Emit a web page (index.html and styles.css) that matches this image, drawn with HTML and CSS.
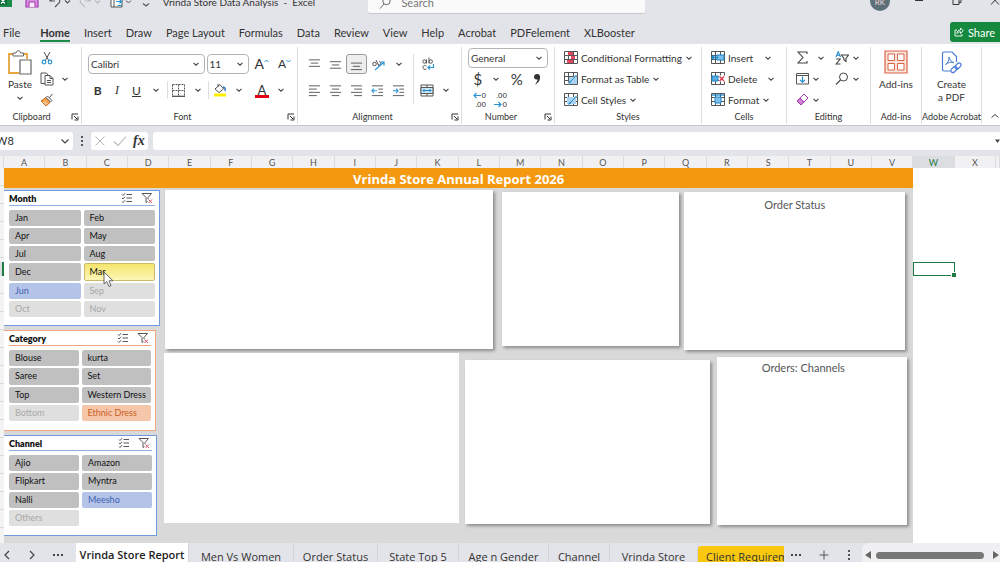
FILE: index.html
```html
<!DOCTYPE html>
<html lang="en">
<head>
<meta charset="utf-8">
<title>Vrinda Store Data Analysis - Excel</title>
<link rel="stylesheet" href="styles.css">
</head>
<body>
<svg class="defs" aria-hidden="true">
  <symbol id="chev" viewBox="0 0 8 8"><path d="M1.5 2.8 4 5.2 6.5 2.8" fill="none" stroke="#444" stroke-width="1.1"/></symbol>
  <symbol id="launch" viewBox="0 0 8 8"><path d="M1 6.5V1h6M3 3l3 3M7 3.5V7H3.5" fill="none" stroke="#333" stroke-width="1"/></symbol>
  <symbol id="multi" viewBox="0 0 12 12"><path d="M1 2.5 2 3.5 4 1.2M1 6 2 7 4 4.7M1 9.5 2 10.500 4 8.200M5.500 2.500H11M5.500 6H11M5.500 9.500H11" fill="none" stroke="#555" stroke-width="1"/></symbol>
  <symbol id="clear" viewBox="0 0 12 12"><path d="M7 7V5.500L10.500 1.500H1L5 5.500V10.500L6.500 9.500" fill="none" stroke="#555" stroke-width="1"/><path d="M7.500 7.500 11 11M11 7.500 7.500 11" stroke="#d8536c" stroke-width="1"/></symbol>
  <symbol id="lefta" viewBox="0 0 14 14"><path d="M1 2H13M1 5.500H9.500M1 9H13M1 12.500H9.500" stroke="#555" stroke-width="1"/></symbol>
  <symbol id="centa" viewBox="0 0 14 14"><path d="M1 2H13M3 5.500H11M1 9H13M3 12.500H11" stroke="#555" stroke-width="1"/></symbol>
  <symbol id="righta" viewBox="0 0 14 14"><path d="M1 2H13M4.500 5.500H13M1 9H13M4.500 12.500H13" stroke="#555" stroke-width="1"/></symbol>
  <symbol id="grid" viewBox="0 0 14 13"><path d="M.5 .5H13.500V12.500H.5ZM.5 4.500H13.500M.5 8.500H13.500M4.500 .5V12.500M9.500 .5V12.500" fill="#fff" stroke="#555" stroke-width="1"/></symbol>
</svg>

<header class="titlebar">
  <div class="quick">
    <svg width="12" height="14" viewBox="0 0 12 14"><path d="M0 0H12V13H0Z" fill="#1d8a4c"/><path d="M6 0h6v6H6z" fill="#37b876"/><path d="M0 3H7V11H0Z" fill="#0f6a38"/><path d="M1 5 5 9.500M5 5 1 9.500" stroke="#fff" stroke-width="1.200"/></svg>
    <svg class="save" width="14" height="14" viewBox="0 0 14 14"><path d="M1 1H11L13 3V13H1Z" fill="#d98be0" stroke="#a23db0" stroke-width="1.200"/><path d="M4 13V8H10V13M4 1V4.500H9V1" fill="#f6e6f8" stroke="#a23db0"/></svg>
    <svg class="undo" width="22" height="14" viewBox="0 0 22 14"><path d="M1 2V7H6M1.500 7C6 1 12 4 10.500 8.500L6 13M16 6.500l2.500 2.500L21 6.500" fill="none" stroke="#555" stroke-width="1.100"/></svg>
    <svg class="redo" width="22" height="14" viewBox="0 0 22 14"><path d="M11 2V7H6M10.500 7C6 1 0 4 1.500 8.500L6 13M16 6.500l2.500 2.500L21 6.500" fill="none" stroke="#b8b9be" stroke-width="1.100"/></svg>
    <svg class="book" width="22" height="14" viewBox="0 0 22 14"><path d="M1 1H12V13H1ZM4 1V13M1 4.500H12" fill="#fff" stroke="#555"/><path d="M6 7.500H11M9.500 5.500l2 2-2 2M7.500 11.500H12" fill="none" stroke="#2a94d6" stroke-width="1.200"/><path d="M16 6.500l2.500 2.500L21 6.500" fill="none" stroke="#555"/></svg>
    <svg class="more" width="8" height="14" viewBox="0 0 8 14"><path d="M1 9.500l3 2.500 3-2.500" fill="none" stroke="#555" stroke-width="1.100"/></svg>
  </div>
  <div class="doc-title">Vrinda Store Data Analysis &nbsp;- &nbsp;Excel</div>
  <label class="search">
    <svg width="12" height="14" viewBox="0 0 12 14"><circle cx="7.500" cy="5" r="3.700" fill="none" stroke="#666"/><path d="M5 8 1 12.500" stroke="#666"/></svg>
    <input type="search" placeholder="Search" aria-label="Search">
  </label>
  <div class="avatar">RK</div>
  <div class="win">
    <svg width="10" height="12" viewBox="0 0 10 12"><path d="M1 6.500H9" stroke="#333"/></svg>
    <svg width="10" height="12" viewBox="0 0 10 12"><path d="M1 4H7V10.500H1ZM3 4V2H9V8.500H7" fill="none" stroke="#333"/></svg>
    <svg width="10" height="12" viewBox="0 0 10 12"><path d="M1 2 9 10.500M9 2 1 10.500" stroke="#333"/></svg>
  </div>
</header>

<nav class="menu">
  <button>File</button><button class="on">Home</button><button>Insert</button><button>Draw</button><button>Page Layout</button><button>Formulas</button><button>Data</button><button>Review</button><button>View</button><button>Help</button><button>Acrobat</button><button>PDFelement</button><button>XLBooster</button>
  <button class="share"><svg width="10" height="10" viewBox="0 0 10 10"><path d="M3 3H1V9H8V7M3 6.500C3 4 4.500 3 6.500 3V1L9.300 3.800 6.500 6.500V4.800C5 4.800 4 5.200 3 6.500Z" fill="none" stroke="#fff" stroke-width=".9"/></svg>Share<svg width="8" height="8" viewBox="0 0 8 8"><path d="M1.500 2.800 4 5.200 6.500 2.800" fill="none" stroke="#fff"/></svg></button>
</nav>

<section class="ribbon" aria-label="Home ribbon">
  <div class="group g-clip">
    <div class="tools clip">
      <button class="big paste">
        <svg width="24" height="26" viewBox="0 0 24 26"><path d="M5 4H1V23H11M16 4H19V9" fill="none" stroke="#e8a33d" stroke-width="1.800"/><path d="M5 6V3H8C8 0 12.500 0 12.500 3H15.500V6Z" fill="#fff" stroke="#666"/><path d="M12 10H23V24H12Z" fill="#fff" stroke="#666" stroke-width="1.200"/></svg>
        Paste
        <svg class="ch"><use href="#chev"/></svg>
      </button>
      <div class="stack">
        <button aria-label="Cut"><svg width="12" height="14" viewBox="0 0 12 14"><path d="M3 1 8 10M9 1 4 10" stroke="#555"/><circle cx="3" cy="11" r="1.800" fill="none" stroke="#2a94d6" stroke-width="1.200"/><circle cx="9" cy="11" r="1.800" fill="none" stroke="#2a94d6" stroke-width="1.200"/></svg></button>
        <div class="pair"><button aria-label="Copy"><svg width="14" height="14" viewBox="0 0 14 14"><path d="M5 11.500H1V1H6.500L8 3" fill="none" stroke="#555"/><path d="M5 3.500H10L13 6.500V13H5ZM10 3.500V6.500H13M7 8.500h4M7 10.500h4" fill="none" stroke="#555"/></svg></button><button aria-label="Copy options"><svg class="ch"><use href="#chev"/></svg></button></div>
        <button aria-label="Format painter"><svg width="14" height="14" viewBox="0 0 14 14"><path d="M1 8 6 4.500 10.500 9 6 13Z" fill="#f0a04b" stroke="#c66b1a"/><path d="M6 4.500 7.500 3 12 7.500 10.500 9ZM9.500 4.500 12.500 1" fill="#fff" stroke="#555"/><path d="M3 9l3.500 3M4.500 8l3 3" stroke="#fff" stroke-width=".7"/></svg></button>
      </div>
    </div>
    <div class="label">Clipboard<svg class="ch"><use href="#launch"/></svg></div>
  </div>

  <div class="group g-font">
    <div class="tools font">
      <div class="row">
        <span class="combo wide"><select aria-label="Font"><option>Calibri</option></select><svg class="ch"><use href="#chev"/></svg></span>
        <span class="combo size"><select aria-label="Font size"><option>11</option></select><svg class="ch"><use href="#chev"/></svg></span>
        <button class="grow" aria-label="Increase font size">A<svg width="5" height="12" viewBox="0 0 5 12"><path d="M.5 4 2.500 2 4.500 4" fill="none" stroke="#2a94d6"/></svg></button>
        <button class="shrink" aria-label="Decrease font size">A<svg width="5" height="12" viewBox="0 0 5 12"><path d="M.5 2 2.500 4 4.500 2" fill="none" stroke="#2a94d6"/></svg></button>
      </div>
      <div class="row biu">
        <button><b>B</b></button><button><i>I</i></button><button><u>U</u></button><button aria-label="Underline options"><svg class="ch"><use href="#chev"/></svg></button>
        <span class="bar"></span>
        <button aria-label="Borders"><svg width="13" height="13" viewBox="0 0 13 13"><path d="M.5 .5H12.500V12M.5 .5V12M6.500 .5V12M.5 6.500H12.500" fill="none" stroke="#555" stroke-dasharray="2 1"/><path d="M0 12.300H13" stroke="#444" stroke-width="1.200"/></svg></button><button aria-label="Border options"><svg class="ch"><use href="#chev"/></svg></button>
        <span class="bar"></span>
        <button aria-label="Fill colour"><svg width="14" height="14" viewBox="0 0 14 14"><path d="M2 6 7 1.500 10.500 6 6 9.500ZM5 4V1" fill="#fff" stroke="#555"/><path d="M10 4C12 4 12.500 6 12 8" fill="none" stroke="#1d6fb8" stroke-width="1.400"/><path d="M1 10.500H13V13.500H1Z" fill="#fff000"/></svg></button><button aria-label="Fill options"><svg class="ch"><use href="#chev"/></svg></button>
        <button class="ink">A</button><button aria-label="Font colour options"><svg class="ch"><use href="#chev"/></svg></button>
      </div>
    </div>
    <div class="label">Font<svg class="ch"><use href="#launch"/></svg></div>
  </div>

  <div class="group g-align">
    <div class="tools align">
      <div class="cells">
        <button aria-label="Top align"><svg width="13" height="13" viewBox="0 0 14 14"><path d="M1 2H13M3 5.500H11M1 9H13" stroke="#555"/></svg></button>
        <button aria-label="Middle align"><svg width="13" height="13" viewBox="0 0 14 14"><path d="M1 4H13M3 7.500H11M1 11H13" stroke="#555"/></svg></button>
        <button class="pressed" aria-label="Bottom align"><svg width="13" height="13" viewBox="0 0 14 14"><path d="M1 5.500H13M3 9H11M1 12.500H13" stroke="#555"/></svg></button>
        <button aria-label="Orientation"><svg width="14" height="13" viewBox="0 0 14 13"><circle cx="3.500" cy="6" r="1.800" fill="none" stroke="#555"/><path d="M5 2 8 8M8 3.500a1.700 1.700 0 1 1-1 3" fill="none" stroke="#555"/><path d="M4 12 13 4M9.500 4H13V7.500" fill="none" stroke="#2a94d6" stroke-width="1.200"/></svg></button>
        <button aria-label="Orientation options"><svg class="ch"><use href="#chev"/></svg></button>
        <button aria-label="Align left"><svg width="13" height="13"><use href="#lefta"/></svg></button>
        <button aria-label="Centre"><svg width="13" height="13"><use href="#centa"/></svg></button>
        <button aria-label="Align right"><svg width="13" height="13"><use href="#righta"/></svg></button>
        <button aria-label="Decrease indent"><svg width="13" height="13" viewBox="0 0 14 14"><path d="M1 2H13M8 5.500H13M8 9H13M1 12.500H13" stroke="#555"/><path d="M6.500 7.200H1M3 5 1 7.200 3 9.500" fill="none" stroke="#2a94d6" stroke-width="1.200"/></svg></button>
        <button aria-label="Increase indent"><svg width="13" height="13" viewBox="0 0 14 14"><path d="M1 2H13M8 5.500H13M8 9H13M1 12.500H13" stroke="#555"/><path d="M1 7.200H6.500M4.500 5 6.500 7.200 4.500 9.500" fill="none" stroke="#2a94d6" stroke-width="1.200"/></svg></button>
      </div>
      <span class="bar tall"></span>
      <div class="wraps">
        <button aria-label="Wrap text" class="wrapbtn"><svg width="14" height="14" viewBox="0 0 14 14"><circle cx="3.500" cy="4.500" r="1.700" fill="none" stroke="#555"/><path d="M5.500 2.500V6.500M8 .5V6.500M5.500 9.200C3 7.500 2 9 2 10.500S3.500 13 5.500 12" fill="none" stroke="#555"/><circle cx="9.800" cy="4.500" r="1.700" fill="none" stroke="#555"/><path d="M12.500 7V10.500H7M9 8.500 7 10.500 9 12.500" fill="none" stroke="#2a94d6" stroke-width="1.200"/></svg></button>
        <div class="pair"><button aria-label="Merge"><svg width="14" height="13" viewBox="0 0 14 13"><path d="M1 1H13V12H1ZM7 1V3.500M7 9.500V12" fill="#fff" stroke="#555"/><path d="M1 3.500H13V9.500H1Z" fill="#cfe8f8" stroke="#555"/><path d="M3 6.500H11M4.500 5 3 6.500 4.500 8M9.500 5 11 6.500 9.500 8" fill="none" stroke="#1b87cc"/></svg></button><button aria-label="Merge options"><svg class="ch"><use href="#chev"/></svg></button></div>
      </div>
    </div>
    <div class="label">Alignment<svg class="ch"><use href="#launch"/></svg></div>
  </div>

  <div class="group g-num">
    <div class="tools num">
      <span class="combo"><select aria-label="Number format"><option>General</option></select><svg class="ch"><use href="#chev"/></svg></span>
      <div class="row money"><button>$</button><button aria-label="Currency options"><svg class="ch"><use href="#chev"/></svg></button><button>%</button><button class="comma" aria-label="Comma style"><svg width="9" height="12" viewBox="0 0 9 12"><path d="M4 1C6.500 1 7.500 3 7 5.500 6.500 8.500 4.500 10.500 2 11.500 3.500 9.500 4.500 8 4.500 6.500 2.500 7 1 5.500 1 4 1 2.300 2.300 1 4 1Z" fill="#333"/></svg></button></div>
      <div class="row dec">
        <button aria-label="Increase decimal"><span><svg width="8" height="7" viewBox="0 0 8 7"><path d="M8 3.500H1M3.500 1 1 3.500 3.500 6" fill="none" stroke="#2a94d6" stroke-width="1.200"/></svg>0</span><span>.00</span></button>
        <button aria-label="Decrease decimal"><span>.00</span><span><svg width="8" height="7" viewBox="0 0 8 7"><path d="M0 3.500H7M4.500 1 7 3.500 4.500 6" fill="none" stroke="#2a94d6" stroke-width="1.200"/></svg>0</span></button>
      </div>
    </div>
    <div class="label">Number<svg class="ch"><use href="#launch"/></svg></div>
  </div>

  <div class="group g-style">
    <div class="tools list">
      <button><svg width="14" height="13"><use href="#grid"/><path d="M4 1H9V4H4ZM7 5H11V8H7ZM3 9H9V12H3Z" fill="#e4445c"/></svg>Conditional Formatting<svg class="ch"><use href="#chev"/></svg></button>
      <button><svg width="14" height="13"><use href="#grid"/><path d="M5 5H13V12H5Z" fill="#a6d3f2"/><path d="M4 12C4 9 6 9 7 8L12 2.500 13 3.500 8 9C7 11 6 12 4 12Z" fill="#1b87cc" stroke="#fff" stroke-width=".5"/></svg>Format as Table<svg class="ch"><use href="#chev"/></svg></button>
      <button><svg width="14" height="13"><use href="#grid"/><path d="M3 4H12V11H3Z" fill="#a6d3f2"/><path d="M4 12C4 9 6 9 7 8L12 2.500 13 3.500 8 9C7 11 6 12 4 12Z" fill="#1b87cc" stroke="#fff" stroke-width=".5"/></svg>Cell Styles<svg class="ch"><use href="#chev"/></svg></button>
    </div>
    <div class="label">Styles</div>
  </div>

  <div class="group g-cells">
    <div class="tools list">
      <button><svg width="14" height="13"><use href="#grid"/><path d="M6 4H13V9H6Z" fill="#7fc0ec" stroke="#1b87cc"/><path d="M7 6.500H1M3.500 4 1 6.500 3.500 9" fill="none" stroke="#1b87cc" stroke-width="1.300"/></svg><span class="w1">Insert</span><svg class="ch"><use href="#chev"/></svg></button>
      <button><svg width="14" height="13"><use href="#grid"/><path d="M1 4H7V9H1Z" fill="#5aaee4" stroke="#1b87cc"/><path d="M8 3.500H14V9.500H8Z" fill="#fff"/><path d="M8.500 4.500 13 9M13 4.500 8.500 9" stroke="#df3349" stroke-width="1.300"/></svg><span class="w2">Delete</span><svg class="ch"><use href="#chev"/></svg></button>
      <button><svg width="14" height="13"><use href="#grid"/><path d="M4 4H10V10H4Z" fill="#7fc0ec" stroke="#1b87cc"/><path d="M1 2H13" stroke="#1b87cc" stroke-width="1.300"/></svg><span>Format</span><svg class="ch"><use href="#chev"/></svg></button>
    </div>
    <div class="label">Cells</div>
  </div>

  <div class="group g-edit">
    <div class="tools edit">
      <button aria-label="AutoSum"><svg width="13" height="13" viewBox="0 0 13 13"><path d="M11 3V1H2L7 6.500 2 12H11V10" fill="none" stroke="#444" stroke-width="1.100"/></svg><svg class="ch far"><use href="#chev"/></svg></button>
      <button aria-label="Sort and filter"><svg width="14" height="14" viewBox="0 0 14 14"><path d="M1 6 3.200 .8 5.500 6M1.800 4.200H4.700" fill="none" stroke="#1b87cc" stroke-width="1.100"/><path d="M1.200 8H5.200L1.200 13H5.500M6.500 4H13.500L11 7.500V10.500L9 9V7.500Z" fill="none" stroke="#444" stroke-width="1.100"/></svg><svg class="ch"><use href="#chev"/></svg></button>
      <button aria-label="Fill"><svg width="13" height="13" viewBox="0 0 13 13"><path d="M.5 1.500H12.500V12H.5ZM.5 3.500H12.500" fill="none" stroke="#555"/><path d="M6.500 4.500V10M4 7.800 6.500 10.200 9 7.800" fill="none" stroke="#1b87cc" stroke-width="1.100"/></svg><svg class="ch"><use href="#chev"/></svg></button>
      <button aria-label="Find and select"><svg width="14" height="13" viewBox="0 0 14 13"><circle cx="8.500" cy="5" r="4" fill="none" stroke="#444"/><path d="M5.500 8 1 12.500" stroke="#444" stroke-width="1.100"/></svg><svg class="ch"><use href="#chev"/></svg></button>
      <button aria-label="Clear"><svg width="13" height="13" viewBox="0 0 13 13"><path d="M1 8 8 1 12 5 5 12Z" fill="#fff" stroke="#a23db0"/><path d="M1 8 4 5 8 9 5 12Z" fill="#cf7fd8" stroke="#a23db0"/></svg><svg class="ch"><use href="#chev"/></svg></button>
    </div>
    <div class="label">Editing</div>
  </div>

  <div class="group g-add">
    <div class="tools mid"><button class="big"><svg width="24" height="24" viewBox="0 0 24 24"><path d="M1 1H23V23H1Z" fill="#fbe3dc" stroke="#d9644a" stroke-width="1.200"/><path d="M4 4H10.500V10.500H4ZM13.500 4H20V10.500H13.500ZM4 13.500H10.500V20H4ZM13.500 13.500H20V20H13.500Z" fill="#fff" stroke="#d9644a"/></svg><span>Add-ins</span></button></div>
    <div class="label">Add-ins</div>
  </div>

  <div class="group g-pdf">
    <div class="tools mid"><button class="big"><svg width="22" height="24" viewBox="0 0 22 24"><path d="M9 21H3C2 21 1.500 20.500 1.500 19.500V3.500C1.500 2.500 2 2 3 2H11L15.500 6.500V12" fill="none" stroke="#4a7ad6" stroke-width="1.200"/><path d="M4.500 14.500C7 13 8.500 9.500 8 7 9 10.500 11 12.500 13 12.500 10 11.800 7 12.500 4.500 14.500Z" fill="none" stroke="#4a7ad6"/><rect x="9.500" y="17.500" width="7" height="4" rx="2" transform="rotate(-45 13 19.500)" fill="none" stroke="#4a7ad6" stroke-width="1.200"/><rect x="13.500" y="14" width="7" height="4" rx="2" transform="rotate(-45 17 16)" fill="none" stroke="#4a7ad6" stroke-width="1.200"/></svg><span>Create<br>a PDF</span></button></div>
    <div class="label">Adobe Acrobat</div>
  </div>
  <div class="group g-end"><button aria-label="Collapse ribbon"><svg width="10" height="8" viewBox="0 0 10 8"><path d="M1.500 5.500 5 2.500 8.500 5.500" fill="none" stroke="#444"/></svg></button></div>
</section>

<section class="formula">
  <label class="namebox"><input value="W8" aria-label="Name box"><svg width="10" height="10" viewBox="0 0 10 10"><path d="M1.500 3.500 5 7 8.500 3.500" fill="none" stroke="#444" stroke-width="1.200"/></svg></label>
  <svg class="dots" width="4" height="12" viewBox="0 0 4 12"><path d="M1 1h2v2H1zM1 5h2v2H1zM1 9h2v2H1z" fill="#555"/></svg>
  <div class="fx">
    <button aria-label="Cancel"><svg width="12" height="12" viewBox="0 0 12 12"><path d="M1.500 1.500 10.500 10.500M10.500 1.500 1.500 10.500" stroke="#b5b5b5"/></svg></button>
    <button aria-label="Enter"><svg width="14" height="12" viewBox="0 0 14 12"><path d="M1 6.500 5 10.500 13 1.500" fill="none" stroke="#b5b5b5" stroke-width="1.100"/></svg></button>
    <button class="fn">fx</button>
  </div>
  <div class="entry"><input aria-label="Formula"><svg width="6" height="6" viewBox="0 0 6 6"><path d="M1 1.500H6L3.500 5Z" fill="#444"/></svg></div>
</section>

<div class="colheads">
  <span></span><span>A</span><span>B</span><span>C</span><span>D</span><span>E</span><span>F</span><span>G</span><span>H</span><span>I</span><span>J</span><span>K</span><span>L</span><span>M</span><span>N</span><span>O</span><span>P</span><span>Q</span><span>R</span><span>S</span><span>T</span><span>U</span><span>V</span><span class="cur">W</span><span>X</span><span></span>
</div>

<main class="sheet">
  <div class="rowheads"><span></span></div>
  <div class="dash">
    <h1>Vrinda Store Annual Report 2026</h1>
    <div class="board">
      <aside class="slicers">
        <section class="slicer month">
          <header><h2>Month</h2><button aria-label="Multi-select"><svg width="12" height="12"><use href="#multi"/></svg></button><button aria-label="Clear filter"><svg width="12" height="12"><use href="#clear"/></svg></button></header>
          <div class="items">
            <button>Jan</button><button>Feb</button><button>Apr</button><button>May</button><button>Jul</button><button>Aug</button><button>Dec</button><button class="hover">Mar<svg class="pointer" width="11" height="17" viewBox="0 0 11 17"><path d="M1 1V13L3.800 10.500 6 15.500 8 14.500 6 9.800H10Z" fill="#fff" stroke="#555" stroke-width=".9"/></svg></button><button class="blue-on">Jun</button><button class="off">Sep</button><button class="off">Oct</button><button class="off">Nov</button>
          </div>
        </section>
        <section class="slicer category">
          <header><h2>Category</h2><button aria-label="Multi-select"><svg width="12" height="12"><use href="#multi"/></svg></button><button aria-label="Clear filter"><svg width="12" height="12"><use href="#clear"/></svg></button></header>
          <div class="items">
            <button>Blouse</button><button>kurta</button><button>Saree</button><button>Set</button><button>Top</button><button>Western Dress</button><button class="off">Bottom</button><button class="orange-on">Ethnic Dress</button>
          </div>
        </section>
        <section class="slicer channel">
          <header><h2>Channel</h2><button aria-label="Multi-select"><svg width="12" height="12"><use href="#multi"/></svg></button><button aria-label="Clear filter"><svg width="12" height="12"><use href="#clear"/></svg></button></header>
          <div class="items">
            <button>Ajio</button><button>Amazon</button><button>Flipkart</button><button>Myntra</button><button>Nalli</button><button class="blue-on">Meesho</button><button class="off">Others</button>
          </div>
        </section>
      </aside>
      <div class="charts">
        <div class="chart-row top">
          <div class="chart c1"></div><div class="chart c2"></div><div class="chart c3">Order Status</div>
        </div>
        <div class="chart-row low">
          <div class="chart c4"></div><div class="chart c5"></div><div class="chart c6">Orders: Channels</div>
        </div>
      </div>
    </div>
  </div>
  <div class="active-cell"></div>
</main>

<footer class="tabs">
  <div class="nav">
    <button aria-label="Previous sheet"><svg width="8" height="10" viewBox="0 0 8 10"><path d="M6 1 2 5 6 9" fill="none" stroke="#444" stroke-width="1.200"/></svg></button>
    <button aria-label="Next sheet"><svg width="8" height="10" viewBox="0 0 8 10"><path d="M2 1 6 5 2 9" fill="none" stroke="#444" stroke-width="1.200"/></svg></button>
    <button aria-label="All sheets"><svg width="10" height="4" viewBox="0 0 10 4"><path d="M0 1h2v2H0zM4 1h2v2H4zM8 1h2v2H8z" fill="#444"/></svg></button>
  </div>
  <button class="tab current">Vrinda Store Report</button>
  <button class="tab t1">Men Vs Women</button><button class="tab t2">Order Status</button><button class="tab t3">State Top 5</button><button class="tab t4">Age n Gender</button><button class="tab t5">Channel</button><button class="tab t6">Vrinda Store</button><button class="tab gold">Client Requirements</button>
  <div class="tail">
    <button aria-label="More sheets"><svg width="10" height="4" viewBox="0 0 10 4"><path d="M0 1h2v2H0zM4 1h2v2H4zM8 1h2v2H8z" fill="#444"/></svg></button>
    <button aria-label="New sheet"><svg width="10" height="10" viewBox="0 0 10 10"><path d="M5 .5V9.500M.5 5H9.500" stroke="#555"/></svg></button>
    <svg width="4" height="12" viewBox="0 0 4 12"><path d="M1 1h2v2H1zM1 5h2v2H1zM1 9h2v2H1z" fill="#555"/></svg>
  </div>
  <div class="scroll">
    <svg width="6" height="8" viewBox="0 0 6 8"><path d="M6 0V8L0 4Z" fill="#666"/></svg><span></span><svg width="6" height="8" viewBox="0 0 6 8"><path d="M0 0V8L6 4Z" fill="#666"/></svg>
  </div>
</footer>
</body>
</html>
```

FILE: styles.css
```css
* { box-sizing: border-box; }
body {
  margin: 0;
  height: 100vh;
  display: flex;
  flex-direction: column;
  overflow: hidden;
  background: #e3e4e9;
  color: #333;
  font-family: Lato, "Open Sans", sans-serif;
  font-size: 10px;
}
button, input, select {
  font: inherit;
  color: inherit;
  border: 0;
  background: none;
  padding: 0;
  margin: 0;
}
button { display: inline-flex; align-items: center; justify-content: center; white-space: nowrap; }
svg { flex: none; display: block; }
.defs { position: absolute; width: 0; height: 0; }
.ch { width: 8px; height: 8px; }

/* title bar */
.titlebar { flex: none; height: 20px; display: flex; align-items: flex-start; overflow: hidden; }
.quick { flex: 1 1 163px; display: flex; margin-top: -6px; }
.save { margin-left: 13px; }
.undo { margin-left: 10px; }
.redo { margin-left: 8px; }
.book { margin-left: 9px; }
.more { margin-left: 10px; }
.doc-title { flex: 1 1 206px; font-size: 10px; line-height: 16px; margin-top: -6px; white-space: nowrap; }
.search {
  flex: 1 1 277px;
  height: 22px;
  margin-top: -8px;
  padding: 0 0 0 11px;
  display: flex;
  align-items: center;
  gap: 10px;
  background: #fafafa;
  border-bottom: 1px solid #c8c8cc;
  border-radius: 3px;
}
.search input { flex: 1; min-width: 0; font-size: 11px; line-height: 16px; outline: 0; }
.search input::placeholder { color: #777; opacity: 1; }
.avatar {
  width: 20px; height: 20px; margin: -9px 0 0 225px; border-radius: 50%;
  background: #5d6f78; color: #f0dada; font-size: 8px; line-height: 22px; text-align: center;
}
.win { flex: 1 1 109px; margin-top: -6px; padding-left: 24px; display: flex; gap: 28px; }

/* ribbon tabs */
.menu { flex: none; height: 24px; display: flex; align-items: flex-end; padding: 0 0 2px 3px; gap: 14px; font-size: 11px; }
.menu button { height: 21px; padding-top: 4px; border-bottom: 2px solid transparent; }
.menu .on { margin-left: 6px; font-weight: 700; border-color: #1d8a4c; }
.menu .share {
  margin-left: auto; width: 50px; height: 20px; padding: 0 0 0 4px; gap: 4px; border: 0;
  justify-content: flex-start; background: #158a3e; color: #fff; border-radius: 3px 0 0 3px; overflow: hidden;
}

/* ribbon */
.ribbon { flex: none; height: 82px; display: flex; background: #fff; border-bottom: 1px solid #c9c9cd; }
.group { min-width: 0; display: flex; flex-direction: column; margin: 3px 0 1px; border-right: 1px solid #dedede; }
.g-clip { flex: 1 1 82px; }
.g-font { flex: 1 1 216px; }
.g-align { flex: 1 1 164px; }
.g-num { flex: 1 1 93px; }
.g-style { flex: 1 1 147px; }
.g-cells { flex: 1 1 85px; }
.g-edit { flex: 1 1 84px; }
.g-add { flex: 1 1 51px; }
.g-pdf { flex: 1 1 60px; }
.g-end { flex: 1 1 18px; border: 0; align-items: flex-end; justify-content: flex-end; padding-bottom: 4px; }
.tools { flex: 1; }
.label { position: relative; text-align: center; font-size: 9px; line-height: 14px; white-space: nowrap; }
.label svg { position: absolute; right: 2px; top: 3px; }
.g-clip .label { padding-right: 18px; }
.g-font .label, .g-num .label, .g-align .label { padding-right: 14px; }
.row { display: flex; align-items: center; }
.bar { width: 1px; height: 18px; background: #dedede; }

.clip { display: flex; padding-left: 7px; }
.big { flex-direction: column; line-height: 13px; }
.paste { width: 26px; margin-top: 3px; justify-content: flex-start; line-height: 16px; }
.paste .ch { margin-top: 2px; }
.stack { display: flex; flex-direction: column; align-items: flex-start; gap: 7px; padding: 4px 0 0 7px; }
.stack > button { width: 14px; }
.pair { display: flex; align-items: center; gap: 7px; }

.combo { position: relative; height: 20px; display: flex; }
.combo select {
  width: 100%; appearance: none; padding-left: 2px; background: #fff;
  border: 1px solid #b4b4b4; border-radius: 4px;
}
.combo svg { position: absolute; right: 5px; top: 6px; pointer-events: none; }
.font { padding: 7px 6px 0; }
.combo.wide { width: 117px; }
.combo.size { width: 43px; margin-left: 2px; }
.grow { margin-left: 5px; font-size: 14px; line-height: 18px; }
.shrink { margin-left: 9px; font-size: 12px; line-height: 18px; }
.biu { height: 18px; margin-top: 7px; font-size: 12px; }
.biu button { width: 20px; height: 18px; }
.biu i { font-family: "Liberation Serif", serif; }
.biu .bar { margin: 0 1px; }
.biu .ink { margin-left: 3px; font-size: 13px; line-height: 14px; position: relative; }
.biu .ink::after { content: ""; position: absolute; left: 3px; right: 3px; bottom: 1px; height: 3px; background: #e60012; }

.align { display: flex; padding: 7px 0 0 6px; }
.cells { display: grid; grid-template-columns: repeat(5, 21px); grid-template-rows: 20px 20px; row-gap: 6px; height: 46px; }
.cells .pressed { border: 1px solid #999; background: #eee; border-radius: 3px; }
.bar.tall { height: 50px; margin-left: 4px; }
.wraps { display: grid; grid-template-rows: 20px 20px; row-gap: 6px; padding-left: 6px; height: 46px; }
.wrapbtn { width: 16px; }
.wraps .pair { gap: 8px; }

.num { padding: 1px 6px 0; }
.money { height: 20px; margin-top: 1px; padding-left: 2px; font-size: 15px; line-height: 18px; }
.money button:nth-child(1) { width: 16px; }
.money button:nth-child(2) { width: 22px; }
.money button:nth-child(3) { width: 20px; }
.money .comma { width: 22px; }
.dec { margin-top: 2px; padding-left: 4px; gap: 7px; font: 8px "Liberation Sans", sans-serif; }
.dec button { flex-direction: column; align-items: flex-end; width: 14px; line-height: 9px; }
.dec span { display: flex; align-items: center; gap: 1px; }

.list { display: grid; grid-template-rows: repeat(3, 21px); padding: 0 0 0 9px; }
.list button { justify-content: flex-start; gap: 3px; }
.w1 { width: 33px; text-align: left; }
.w2 { width: 36px; text-align: left; }
.edit { display: grid; grid-template-columns: 39px 1fr; grid-template-rows: repeat(3, 21px); padding-left: 9px; }
.edit button { justify-content: flex-start; gap: 3px; }
.edit .far { margin-left: 5px; }
.mid { display: flex; justify-content: center; padding-top: 3px; }
.mid .big { justify-content: flex-start; gap: 4px; }
.mid .big span { display: block; }

/* formula bar */
.formula { flex: none; height: 30px; display: flex; align-items: center; padding-bottom: 1px; }
.namebox { width: 73px; height: 18px; padding-right: 3px; background: #fff; border-radius: 0 3px 3px 0; display: flex; align-items: center; }
.namebox input { flex: 1; min-width: 0; font-size: 11px; text-indent: -4px; }
.dots { margin: 0 7px; }
.fx { width: 57px; height: 18px; background: #fff; border-radius: 3px; display: flex; align-items: center; justify-content: space-around; }
.fn { font: italic 700 14px "Liberation Serif", serif; }
.entry { flex: 1; min-width: 0; height: 18px; margin-left: 5px; background: #fff; border-radius: 3px 0 0 3px; display: flex; align-items: center; }
.entry input { flex: 1; min-width: 0; }

/* column headings */
.colheads, .sheet { display: grid; grid-template-columns: 4px repeat(24, 1fr) 4px; }
.colheads { flex: none; height: 12px; background: #f1f1f3; font-size: 9px; line-height: 13px; text-align: center; color: #555; }
.colheads span { border-right: 1px solid #dcdcde; }
.colheads .cur { background: #dcdde0; color: #1d7a45; border-bottom: 1px solid #1d7a45; }

/* sheet */
.sheet { flex: 1; min-height: 0; background: #fff; grid-template-rows: 1fr; }
.rowheads { background: repeating-linear-gradient(#f3f3f3 0 17px, #dcdcdc 17px 18px); padding-top: 94px; }
.rowheads span { display: block; height: 14px; background: #dcdde0; border-right: 2px solid #1d7a45; }
.dash { grid-column: 2 / span 22; background: #d9d9d9; }
.dash h1 { margin: 0; height: 20px; background: #f4990f; color: #fff; font: 700 13px/22px "Open Sans", "Noto Sans", sans-serif; text-align: center; }
.board { display: flex; padding-top: 2px; }
.active-cell { position: relative; height: 14px; margin-top: 94px; border: 1px solid #1d7a45; }
.active-cell::after { content: ""; position: absolute; right: -2px; bottom: -2px; width: 4px; height: 4px; background: #1d7a45; border: solid #fff; border-width: 1px 0 0 1px; }

.slicers { flex: none; width: 160px; display: flex; flex-direction: column; gap: 4px; align-items: flex-start; }
.slicer { background: #fff; border: 1px solid #6f9be0; border-left: 0; padding: 0 4px 0 5px; font-size: 9px; }
.slicer header { display: flex; align-items: center; gap: 8px; height: 15px; padding-right: 2px; border-bottom: 1px solid #8fb0e6; }
.slicer h2 { flex: 1; margin: 0; font-size: 9px; font-weight: 800; color: #111; }
.items { display: grid; grid-template-columns: repeat(2, minmax(0, 1fr)); gap: 2px 3px; margin-top: 4px; }
.items button {
  position: relative; justify-content: flex-start; height: 100%; min-height: 0; padding-left: 6px;
  background: #c0c0c0; border-radius: 2px; color: #111; line-height: 14px;
}
.month { width: 156px; height: 136px; }
.month .items { height: 107px; }
.category { width: 152px; height: 101px; border-color: #f0a77e; }
.category header { border-color: #f0a77e; }
.category .items, .channel .items { height: 71px; }
.channel { width: 153px; height: 101px; }
.items .off { background: #dfdfdf; color: #a8a8a8; }
.items .blue-on { background: #b4c4e8; color: #4060b0; }
.items .orange-on { background: #f6c6ab; color: #c95f1e; }
.items .hover { background: linear-gradient(#f5e56c, #fdf6b8); border: 1px solid #c9b96a; padding-left: 5px; }
.pointer { position: absolute; left: 18px; top: 7px; z-index: 1; }

.charts { flex: 1; min-width: 0; }
.chart-row { display: flex; align-items: flex-start; }
.top { height: 163px; padding: 0 8px 0 1px; }
.low { padding-right: 6px; }
.chart { background: #fff; box-shadow: 2px 2px 3px #8c8c8c; text-align: center; font-size: 11px; line-height: 16px; color: #555; }
.c1 { flex: 328 1 0; height: 159px; }
.c2 { flex: 177 1 0; height: 154px; margin: 2px 5px 0 9px; }
.c3 { flex: 221 1 0; height: 158px; margin-top: 2px; padding-top: 5px; }
.c4 { flex: 295 1 0; height: 170px; box-shadow: none; }
.c5 { flex: 245 1 0; height: 164px; margin: 7px 7px 0 6px; }
.c6 { flex: 190 1 0; height: 168px; margin-top: 4px; padding-top: 3px; text-indent: -18px; }

/* sheet tabs */
.tabs { flex: none; height: 19px; display: flex; overflow: hidden; font-family: "Open Sans", "Noto Sans", sans-serif; font-size: 11px; }
.nav { flex: 1 1 76px; display: flex; align-items: center; height: 24px; padding-left: 3px; gap: 17px; }
.tab { height: 26px; min-width: 0; border-right: 1px solid #d4d5da; }
.current { flex: 1 1 113px; height: 22px; background: #fff; font-weight: 600; color: #222; }
.t1 { flex: 1 1 105px; }
.t2 { flex: 1 1 84px; }
.t3 { flex: 1 1 81px; }
.t4 { flex: 1 1 90px; }
.t5 { flex: 1 1 61px; }
.t6 { flex: 1 1 88px; }
.gold { flex: 1 1 86px; margin-top: 3px; height: 20px; padding-left: 8px; justify-content: flex-start; overflow: hidden; background: #f9c80e; border: 0; border-radius: 3px 0 0 0; }
.tail { flex: 1 1 78px; display: flex; align-items: center; height: 24px; padding-left: 7px; gap: 18px; }
.scroll { flex: 1 1 138px; height: 24px; display: flex; align-items: center; gap: 5px; padding: 0 1px 0 3px; background: #f0f0f2; border-radius: 6px 0 0 6px; }
.scroll span { flex: 1; height: 7px; border-radius: 4px; background: #777; margin-right: 4px; }
```
